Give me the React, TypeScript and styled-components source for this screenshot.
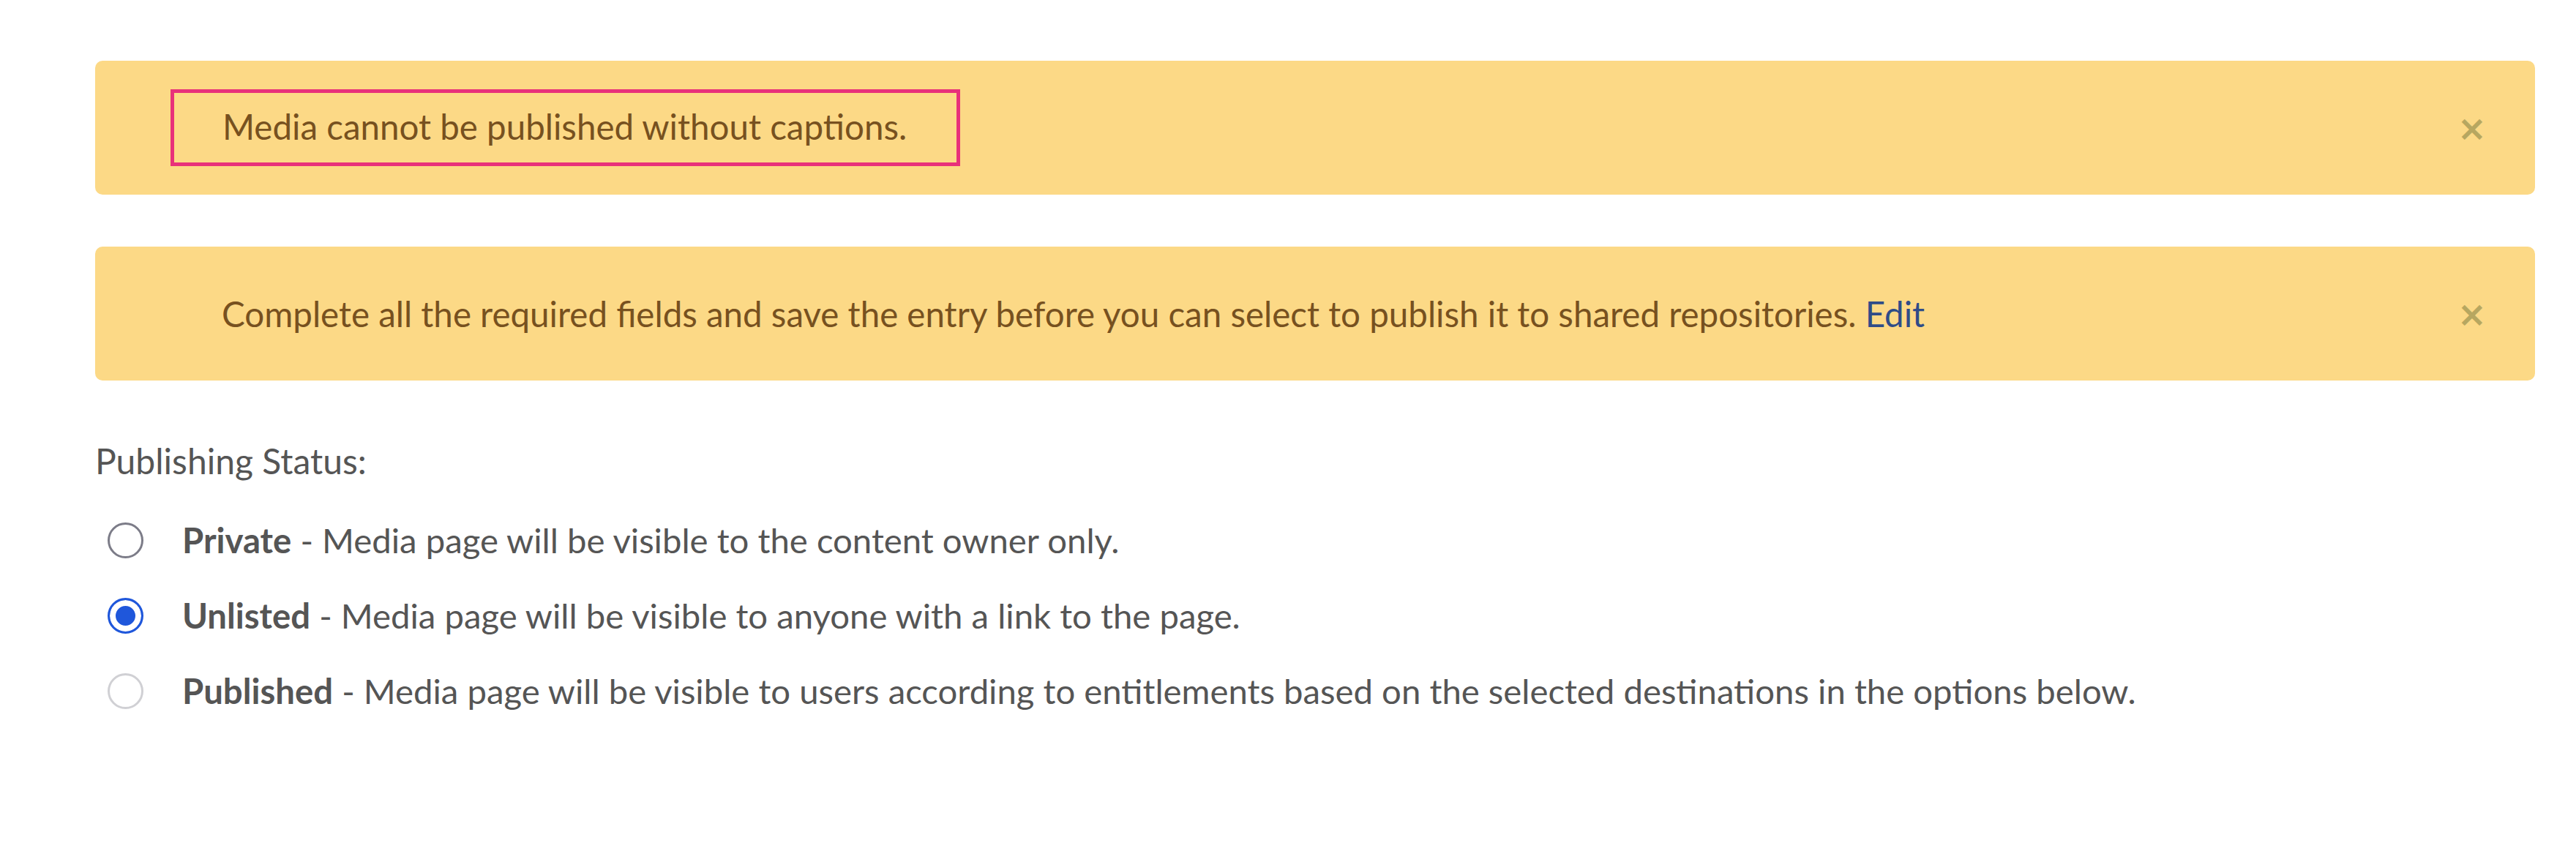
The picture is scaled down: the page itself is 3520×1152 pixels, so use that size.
import React from "react";
import styled, { createGlobalStyle } from "styled-components";

const Global = createGlobalStyle`
  html, body { margin: 0; padding: 0; background: #ffffff; }
  body { font-family: Lato, "Open Sans", "Liberation Sans", sans-serif; }
`;

const Page = styled.div`
  padding: 83px 56px 60px 130px;
  display: flex;
  flex-direction: column;
`;

const Alert = styled.div<{ $gapAfter?: number }>`
  box-sizing: border-box;
  min-height: 183px;
  display: flex;
  align-items: center;
  justify-content: space-between;
  background: #fcd986;
  border-radius: 10px;
  padding: 0 66px 0 173px;
  margin-bottom: ${(p) => p.$gapAfter ?? 0}px;
  color: #77511f;
  font-size: 47.5px;
  line-height: 60px;
`;

const AlertText = styled.span``;

const Highlight = styled.span`
  display: inline-block;
  margin-left: -70px;
  padding: 16px 68px 19px 66px;
  border: 5px solid #e8317a;
`;

const EditLink = styled.a`
  color: #2f4c88;
  text-decoration: none;
  cursor: pointer;
`;

const Close = styled.button`
  border: none;
  background: none;
  padding: 0;
  font-family: "DejaVu Sans", sans-serif;
  font-weight: 700;
  font-size: 48px;
  line-height: 1;
  color: #b7a760;
  cursor: pointer;
`;

const Label = styled.div`
  margin-top: 80px;
  color: #555555;
  font-size: 48px;
  line-height: 60px;
`;

const Options = styled.div`
  display: flex;
  flex-direction: column;
  gap: 43px;
  margin-top: 48px;
  padding-left: 17px;
`;

const Option = styled.label`
  display: flex;
  align-items: center;
  gap: 53px;
  color: #555555;
  font-size: 47.3px;
  line-height: 60px;
`;

const Radio = styled.input<{ $disabledLook?: boolean }>`
  appearance: none;
  -webkit-appearance: none;
  margin: 0;
  box-sizing: border-box;
  width: 49px;
  height: 49px;
  border-radius: 50%;
  border: 3px solid ${(p) => (p.$disabledLook ? "#d0d0d4" : "#7c7c88")};
  background: #ffffff;
  flex-shrink: 0;

  &:checked {
    border-color: #1f57db;
    background: #1f57db;
    box-shadow: inset 0 0 0 8px #ffffff;
  }
`;

const Strong = styled.b`
  font-weight: 700;
`;

const options = [
  { key: "private", title: "Private", desc: " - Media page will be visible to the content owner only.", checked: false, dim: false },
  { key: "unlisted", title: "Unlisted", desc: " - Media page will be visible to anyone with a link to the page.", checked: true, dim: false },
  { key: "published", title: "Published", desc: " - Media page will be visible to users according to entitlements based on the selected destinations in the options below.", checked: false, dim: true },
];

export default function App() {
  return (
    <>
      <Global />
      <Page>
        <Alert $gapAfter={71}>
          <AlertText>
            <Highlight>Media cannot be published without captions.</Highlight>
          </AlertText>
          <Close aria-label="close">×</Close>
        </Alert>
        <Alert>
          <AlertText>
            Complete all the required fields and save the entry before you can select to publish it to shared repositories.{" "}
            <EditLink>Edit</EditLink>
          </AlertText>
          <Close aria-label="close">×</Close>
        </Alert>
        <Label>Publishing Status:</Label>
        <Options>
          {options.map((o) => (
            <Option key={o.key}>
              <Radio type="radio" name="status" defaultChecked={o.checked} $disabledLook={o.dim} />
              <span>
                <Strong>{o.title}</Strong>
                {o.desc}
              </span>
            </Option>
          ))}
        </Options>
      </Page>
    </>
  );
}
